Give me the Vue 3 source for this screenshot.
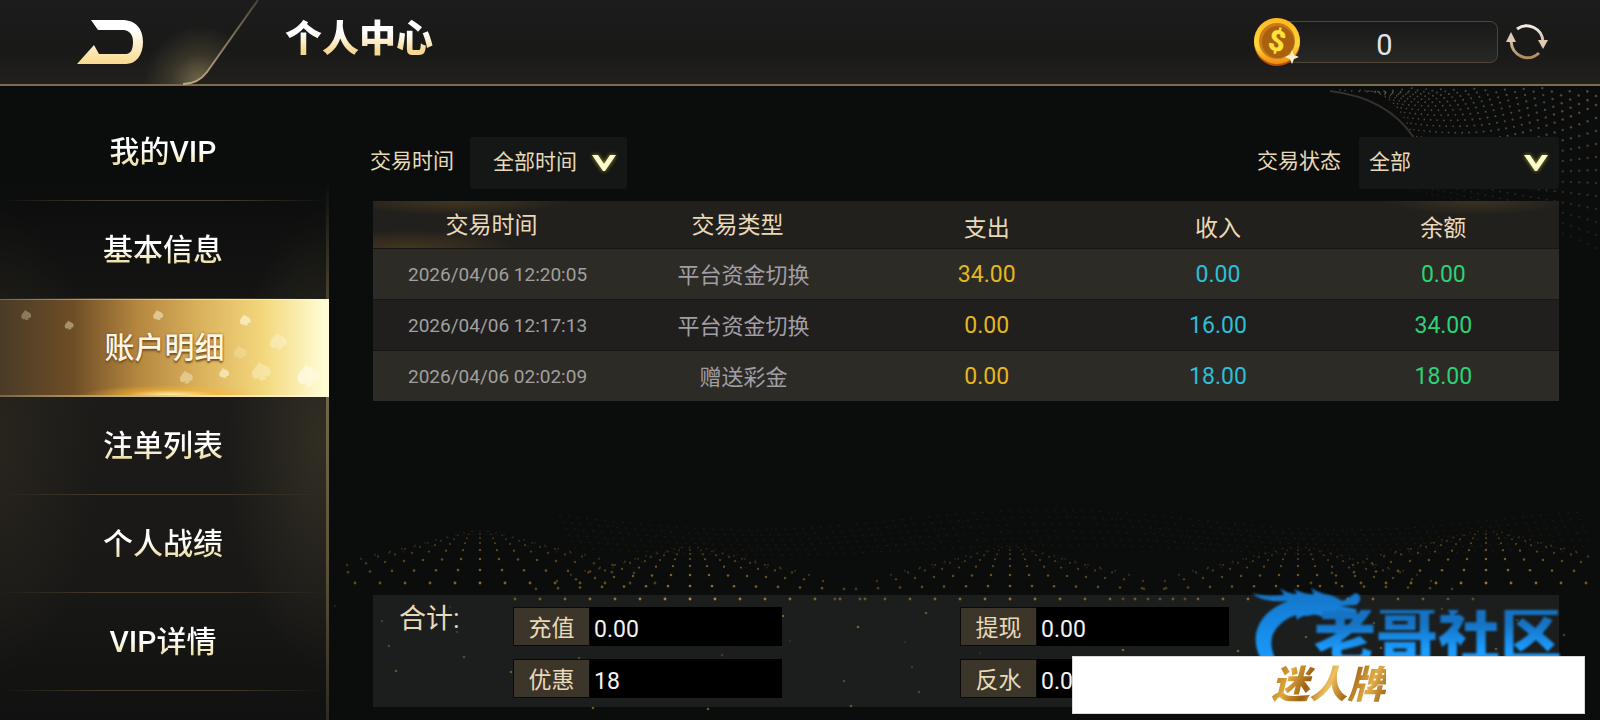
<script setup>
import { ref, computed } from 'vue';

const menus = ['我的VIP', '基本信息', '账户明细', '注单列表', '个人战绩', 'VIP详情'];
const active = ref('账户明细');

const time = ref('全部时间');
const status = ref('全部');
const balance = ref(0);

const records = ref([
  { id: 1, time: '2026/04/06 12:20:05', type: '平台资金切换', out: 34, in: 0, balance: 0 },
  { id: 2, time: '2026/04/06 12:17:13', type: '平台资金切换', out: 0, in: 16, balance: 34 },
  { id: 3, time: '2026/04/06 02:02:09', type: '赠送彩金', out: 0, in: 18, balance: 18 },
]);

const totals = [
  { id: 'recharge', label: '充值', value: '0.00' },
  { id: 'withdraw', label: '提现', value: '0.00' },
  { id: 'bonus', label: '优惠', value: '18' },
  { id: 'rebate', label: '反水', value: '0.00' },
];

// x, y, size, opacity
const spades = [
  [26, 16, 10, 0.3],
  [69, 26, 9, 0.4],
  [158, 16, 10, 0.5],
  [245, 21, 11, 0.65],
  [278, 42, 17, 0.4],
  [240, 53, 13, 0.25],
  [186, 78, 13, 0.4],
  [224, 74, 10, 0.6],
  [261, 72, 19, 0.4],
  [308, 76, 22, 0.9],
];

// the gold wave at the bottom: five hills of dots, the far rows closer together
const hills = [
  { x: 480, top: 531, light: 0.8 },
  { x: 690, top: 547, light: 1 },
  { x: 1010, top: 547, light: 0.8 },
  { x: 1298, top: 547, light: 0.8 },
  { x: 1486, top: 531, light: 0.9 },
];
const rowTops = [0, 3, 7, 12, 19, 28, 39, 52];
const rowGaps = [8, 11, 13, 15, 17, 19, 22, 25];

const waveDots = computed(() => {
  const dots = [];
  hills.forEach((hill) => {
    rowTops.forEach((top, i) => {
      for (let k = -7; k <= 7; k++) {
        const x = hill.x + k * rowGaps[i];
        if (x < 331 || x > 1590) continue;
        const y = hill.top + top + k * k * (7 - i) * 0.06;
        const o = hill.light * (0.3 + i * 0.1) * (1 - Math.abs(k) * 0.07);
        dots.push({ x, y, r: 0.8 + i * 0.09, o });
      }
    });
  });
  // far rows behind the hills
  for (let i = 0; i < 6; i++) {
    for (let x = 560; x < 1580; x += 9) {
      const y = 520 + i * 6 + Math.sin((x - 600) / 95) * (10 - i);
      dots.push({ x: x + i * 3, y, r: 0.8, o: 0.14 });
    }
  }
  // loose dots in front
  for (let i = 0; i < 64; i++) {
    const x = 335 + ((i * 197) % 1250);
    const y = 606 + ((i * 37) % 104);
    dots.push({ x, y, r: 1.3, o: 0.15 + (i % 5) * 0.12 });
  }
  return dots;
});

// the fan of dots in the top right corner
const fanDots = computed(() => {
  const dots = [];
  for (let j = 0; j < 25; j++) {
    const t = Math.min(j / 13, 1);
    const startX = 1340 + 73 * Math.sqrt(t);
    const startY = 90 + 46 * t * t + Math.max(j - 13, 0) * 5;
    const endY = j < 13 ? 105 - (13 - j) * 9 : 105 + (j - 13) * 13;
    for (let k = 0; k <= 26; k++) {
      const u = Math.pow(k / 26, 1.2);
      const x = startX + u * (1596 - startX);
      const y = startY + (endY - startY) * u * u + 8 * Math.sin(u * Math.PI);
      if (y < 88) continue;
      dots.push({ x, y, r: 0.8 + u * 0.5, o: j < 14 ? 0.5 : 0.5 - (j - 13) * 0.036 });
    }
  }
  return dots;
});

function money(n) {
  return n.toFixed(2);
}

function refresh() {
  balance.value = 0;
}
</script>

<template>
  <div class="page">
    <svg class="backdrop" viewBox="0 0 1600 720" preserveAspectRatio="xMidYMid slice" aria-hidden="true">
      <circle v-for="(d, i) in waveDots" :key="'w' + i" :cx="d.x" :cy="d.y" :r="d.r" :opacity="d.o" fill="#b07f2e" />
      <circle v-for="(d, i) in fanDots" :key="'f' + i" :cx="d.x" :cy="d.y" :r="d.r" :opacity="d.o" fill="#9a8460" />
      <path d="M1330 91 Q1388 98 1414 138" fill="none" stroke="#35302a" stroke-width="2" />
    </svg>

    <header class="header">
      <svg class="header-tab" viewBox="0 0 270 86" aria-hidden="true">
        <defs>
          <radialGradient id="tabGlow" gradientUnits="userSpaceOnUse" cx="200" cy="82" r="56">
            <stop offset="0" stop-color="#8d8058" stop-opacity="0.75" />
            <stop offset="0.5" stop-color="#8d8058" stop-opacity="0.25" />
            <stop offset="1" stop-color="#8d8058" stop-opacity="0" />
          </radialGradient>
          <linearGradient id="tabLine" x1="0" y1="0" x2="0" y2="1">
            <stop offset="0" stop-color="#4a4338" />
            <stop offset="1" stop-color="#bda987" />
          </linearGradient>
        </defs>
        <path d="M0 0 H258 L207 72 Q198 84 183 84 H0 Z" fill="url(#tabGlow)" />
        <path d="M258 0 L207 72 Q198 84 183 84" fill="none" stroke="url(#tabLine)" stroke-width="2" />
      </svg>
      <button class="back" aria-label="返回">
        <svg width="68" height="46" viewBox="76 19 68 46">
          <defs>
            <linearGradient id="backFill" x1="0" y1="0" x2="0" y2="1">
              <stop offset="0.2" stop-color="#ffffff" />
              <stop offset="1" stop-color="#f9d98c" />
            </linearGradient>
          </defs>
          <path
            d="M91 20 H122 C136 20 143 29 143 42 C143 55 136 64 126 64 H77 L94 45 L99 54 H126 C131 54 133 49 133 42 C133 35 130 31 124 30 H98 Z"
            fill="url(#backFill)"
          />
        </svg>
      </button>
      <h1 class="title">个人中心</h1>
      <div class="wallet">
        <svg class="coin" width="48" height="48" viewBox="0 0 48 48" aria-hidden="true">
          <defs>
            <linearGradient id="coinRim" x1="0" y1="0" x2="0" y2="1">
              <stop offset="0" stop-color="#ffb820" />
              <stop offset="0.6" stop-color="#ffd83c" />
              <stop offset="1" stop-color="#f08a10" />
            </linearGradient>
          </defs>
          <circle cx="24" cy="25" r="23" fill="#b4520a" />
          <circle cx="24" cy="23" r="23" fill="url(#coinRim)" />
          <circle cx="24" cy="23" r="18" fill="#c87a18" />
          <circle cx="25" cy="24" r="16" fill="#a9600f" />
          <text class="coin-sign" x="24" y="33" text-anchor="middle" transform="rotate(12 24 23)">$</text>
          <path d="M39 32 L41 37 L46 39 L41 41 L39 46 L37 41 L32 39 L37 37 Z" fill="#fff3cf" />
        </svg>
        <output class="balance">{{ balance }}</output>
        <button class="refresh" aria-label="刷新" @click="refresh">
          <svg width="42" height="40" viewBox="0 0 42 40">
            <defs>
              <linearGradient id="refreshLine" gradientUnits="userSpaceOnUse" x1="0" y1="2" x2="0" y2="38">
                <stop offset="0" stop-color="#f6f2ec" />
                <stop offset="1" stop-color="#a98559" />
              </linearGradient>
            </defs>
            <g fill="none" stroke="url(#refreshLine)" stroke-width="3">
              <path d="M11 7 C22 -1 36 7 37 19" />
              <path d="M33 31 C22 41 6 34 5 19" />
            </g>
            <path d="M32 18 H42 L37 27 Z" fill="#dccbae" />
            <path d="M0 20 H10 L5 10 Z" fill="#dccbae" />
          </svg>
        </button>
      </div>
    </header>

    <div class="body">
      <nav class="sidebar">
        <button
          v-for="menu in menus"
          :key="menu"
          class="menu"
          :class="{ active: menu === active }"
          @click="active = menu"
        >
          <svg v-if="menu === active" class="spades" viewBox="0 0 329 98" aria-hidden="true">
            <path
              v-for="(s, i) in spades"
              :key="i"
              d="M0 -5 C1 -3 5 -2 5 1 C5 4 2 4 1 3 L2 5 H-2 L-1 3 C-2 4 -5 4 -5 1 C-5 -2 -1 -3 0 -5 Z"
              fill="#fff8dc"
              :opacity="s[3]"
              :transform="`translate(${s[0]} ${s[1]}) rotate(-12) scale(${s[2] / 10})`"
            />
          </svg>
          <span class="menu-text">{{ menu }}</span>
        </button>
      </nav>

      <main class="main">
        <div class="filters">
          <label for="time">交易时间</label>
          <div class="select">
            <select id="time" v-model="time">
              <option>全部时间</option>
              <option>今天</option>
              <option>昨天</option>
            </select>
            <svg class="arrow" width="26" height="20" viewBox="0 0 26 20" aria-hidden="true">
              <path d="M1 2 H7 L13 11 L19 2 H25 L14 18 H12 Z" fill="#fdfbd2" />
            </svg>
          </div>
          <label class="status-label" for="status">交易状态</label>
          <div class="select wide">
            <select id="status" v-model="status">
              <option>全部</option>
              <option>支出</option>
              <option>收入</option>
            </select>
            <svg class="arrow" width="26" height="20" viewBox="0 0 26 20" aria-hidden="true">
              <path d="M1 2 H7 L13 11 L19 2 H25 L14 18 H12 Z" fill="#fdfbd2" />
            </svg>
          </div>
        </div>

        <table class="records">
          <thead>
            <tr>
              <th class="col-time">交易时间</th>
              <th class="col-type">交易类型</th>
              <th class="col-out amount">支出</th>
              <th class="col-in amount">收入</th>
              <th class="amount">余额</th>
            </tr>
          </thead>
          <tbody>
            <tr v-for="item in records" :key="item.id">
              <td class="time">{{ item.time }}</td>
              <td class="type">{{ item.type }}</td>
              <td class="out">{{ money(item.out) }}</td>
              <td class="in">{{ money(item.in) }}</td>
              <td class="rest">{{ money(item.balance) }}</td>
            </tr>
          </tbody>
        </table>

        <section class="summary">
          <h2>合计:</h2>
          <div class="totals">
            <div v-for="t in totals" :key="t.id" class="total">
              <label :for="t.id">{{ t.label }}</label>
              <input :id="t.id" type="text" :value="t.value" readonly />
            </div>
          </div>
        </section>
      </main>
    </div>

    <div class="watermark">
      <svg class="dragon" width="112" height="80" viewBox="0 0 112 80" aria-hidden="true">
        <defs>
          <linearGradient id="dragonFill" x1="0" y1="0" x2="0" y2="1">
            <stop offset="0" stop-color="#1673c4" />
            <stop offset="0.4" stop-color="#1585e0" />
            <stop offset="1" stop-color="#1b9dff" />
          </linearGradient>
        </defs>
        <path
          d="M0 9 Q12 13 32 11 L28 4 Q36 10 45 10 L42 5 Q53 11 62 10 L59 4 Q69 10 78 11 Q86 14 90 17 Q98 14 103 9 Q108 10 108 13 Q109 18 104 21 L88 22 L104 25 Q106 30 101 32 Q90 30 83 28 Q74 28 70 33 Q64 29 56 32 Q50 31 45 36 L44 31 Q28 36 21 50 Q16 63 26 80 H12 Q2 66 4 50 Q8 28 36 17 Q10 19 0 9 Z"
          fill="url(#dragonFill)"
        />
      </svg>
      <span class="watermark-text">老哥社区</span>
    </div>
    <div class="banner"><span>迷人牌</span></div>
  </div>
</template>

<style>
body {
  background: #0b0c0c;
}
</style>

<style scoped>
.page {
  position: relative;
  display: flex;
  flex-direction: column;
  min-height: 100vh;
  overflow: hidden;
  background: #0b0d0c;
  color: #e8d9b8;
  font-family: Roboto, 'Noto Sans CJK SC', sans-serif;
}

.page * {
  box-sizing: border-box;
}

button {
  padding: 0;
  border: 0;
  background: none;
  font: inherit;
  cursor: pointer;
}

svg {
  display: block;
}

.backdrop {
  position: absolute;
  inset: 0;
  width: 100%;
  height: 100%;
}

/*header*/
.header {
  position: relative;
  display: flex;
  align-items: center;
  height: 86px;
  padding: 0 52px 0 76px;
  border-bottom: 2px solid #7d6b50;
  background: linear-gradient(#1d1c1c, #191918 60%, #22201d);
}

.header-tab {
  position: absolute;
  top: 0;
  left: 0;
  width: 270px;
  height: 86px;
}

.back {
  position: relative;
}

.title {
  margin: 0 0 4px 141px;
  background: linear-gradient(#ffffff 35%, #f6d98f 75%);
  background-clip: text;
  color: transparent;
  font-size: 37px;
  font-weight: 900;
  line-height: 44px;
}

.wallet {
  display: flex;
  align-items: center;
  margin-left: auto;
}

.coin {
  position: relative;
  margin-right: -24px;
}

.coin-sign {
  fill: #ffe13a;
  font-size: 29px;
  font-weight: 900;
}

.balance {
  width: 221px;
  height: 42px;
  margin-right: 8px;
  padding-right: 6px;
  border: 1px solid #4e4735;
  border-radius: 8px;
  background: linear-gradient(#191919, #272725);
  color: #e3e3ea;
  font-size: 29px;
  line-height: 46px;
  text-align: center;
}

/*sidebar*/
.body {
  position: relative;
  display: flex;
  flex: 1;
}

.sidebar {
  display: flex;
  flex-direction: column;
  width: 329px;
  padding-top: 17px;
  border-right: 3px solid;
  border-image: linear-gradient(transparent 15%, #6f6747 50%, #5c5439 75%, #2e2a20) 1;
  background:
    radial-gradient(ellipse 100px 230px at 0 56%, #28241d, transparent),
    radial-gradient(ellipse 100px 230px at 100% 56%, #322e24, transparent),
    linear-gradient(#0b0d0c 15%, #1c1b19 50%, #191816 78%, #101110);
}

.menu {
  display: grid;
  place-items: center;
  height: 98px;
  border-bottom: 1px solid;
  border-image: linear-gradient(90deg, transparent, #443b28 30%, #443b28 70%, transparent) 1;
  font-size: 30px;
  font-weight: 500;
}

.menu-text {
  grid-area: 1 / 1;
  background: linear-gradient(#ffffff 45%, #eee0a8 80%);
  background-clip: text;
  color: transparent;
  line-height: 40px;
}

.menu.active {
  margin-right: -3px;
  border-top: 1px solid #f6dc9c;
  border-bottom: 2px solid #e8c470;
  border-image: linear-gradient(90deg, #7a6642, #f6dc9c 60%, #fffbe0) 1;
  background:
    radial-gradient(ellipse 90px 10px at 52% 100%, #fff2a8, #ffb62a80 50%, transparent),
    linear-gradient(90deg, #4a3b27, #6e4d26 22%, #b5873f 42%, #dcb45e 62%, #f3d77c 80%, #fffbd2 98%);
}

.active .menu-text {
  background: none;
  color: #fff6e4;
  text-shadow: 0 2px 2px #74501f, 0 0 2px #74501f;
}

.spades {
  grid-area: 1 / 1;
  width: 100%;
}

/*main*/
.main {
  display: flex;
  flex: 1;
  flex-direction: column;
  padding: 51px 41px 13px 44px;
}

.filters {
  display: flex;
  align-items: center;
  margin-left: -3px;
  font-size: 21px;
}

.filters label {
  padding-bottom: 8px;
}

.filters .status-label {
  margin-left: auto;
}

.select {
  display: grid;
  align-items: center;
  width: 157px;
  height: 52px;
  margin-left: 16px;
}

.select select {
  grid-area: 1 / 1;
  width: 100%;
  height: 100%;
  padding: 0 0 2px 23px;
  border: 0;
  border-radius: 3px;
  background: #151616;
  color: inherit;
  font: inherit;
  appearance: none;
}

.wide {
  width: 200px;
  margin-left: 18px;
}

.wide select {
  padding-left: 10px;
}

.arrow {
  grid-area: 1 / 1;
  justify-self: end;
  margin-right: 10px;
  filter: drop-shadow(0 0 2px #a8a418);
  pointer-events: none;
}

.records {
  width: 100%;
  margin-top: 12px;
  border-collapse: collapse;
  table-layout: fixed;
  text-align: center;
}

.records thead tr {
  height: 47px;
  background:
    radial-gradient(ellipse 110px 14px at 7% 0, #43361f, transparent),
    radial-gradient(ellipse 110px 18px at 3% 100%, #43361f, transparent),
    radial-gradient(ellipse 90px 14px at 93% 0, #3b3222, transparent),
    #22201d;
}

.records th {
  padding: 0 12px 2px 0;
  color: #ead9b8;
  font-size: 23px;
  font-weight: 400;
}

.records th.amount {
  padding: 4px 0 0;
}

.col-time {
  width: 21%;
}

.col-type,
.col-out {
  width: 20.5%;
}

.col-in {
  width: 18.5%;
}

.records tbody tr {
  height: 51px;
  border-top: 1px solid #171611;
  background: #2d2b25;
}

.records tbody tr:nth-child(2) {
  background: #201f1d;
}

.records td {
  padding: 2px 0 0;
  font-size: 23px;
}

.records .time {
  color: #a19fa0;
  font-size: 19px;
}

.records .type {
  padding: 0 0 2px;
  color: #a19ea5;
  font-size: 22px;
}

.records .out {
  color: #e4b71f;
}

.records .in {
  color: #2cbfd5;
}

.records .rest {
  color: #2bd276;
}

.summary {
  display: flex;
  height: 112px;
  margin-top: auto;
  padding: 12px 0 0 26px;
  background: #ffffff12;
}

.summary h2 {
  width: 114px;
  margin: 0;
  font-size: 27px;
  font-weight: 400;
  line-height: 24px;
}

.totals {
  display: grid;
  flex: 1;
  grid-template-columns: 447px 1fr;
  align-content: start;
  gap: 13px 0;
}

.total {
  display: flex;
  height: 39px;
}

.total label {
  width: 77px;
  border: 1px solid #0a0a08;
  background: #3c362a;
  font-size: 23px;
  line-height: 41px;
  text-align: center;
}

.total input {
  width: 192px;
  padding: 5px 0 0 4px;
  border: 0;
  background: #000;
  color: #f4f4f4;
  font: inherit;
  font-size: 23px;
}

/*floating ads*/
.watermark {
  position: absolute;
  right: 38px;
  bottom: 56px;
  display: flex;
  align-items: flex-start;
  height: 80px;
  filter: blur(1px);
}

.dragon {
  margin-right: -50px;
}

.watermark-text {
  margin-top: 26px;
  background: linear-gradient(#1673c4 25%, #1b9dff 75%);
  background-clip: text;
  color: transparent;
  font-size: 62px;
  font-weight: 900;
  line-height: 54px;
}

.banner {
  position: absolute;
  right: 15px;
  bottom: 6px;
  display: grid;
  place-items: center;
  width: 513px;
  height: 58px;
  border: 1px solid #d8d8d4;
  background: #fff;
}

.banner span {
  background: linear-gradient(115deg, #8a5410, #e0a83c 20%, #9a5f12 35%, #f0c060 50%, #a86a18 65%, #e2ad48 80%, #7c4a0c);
  background-clip: text;
  color: transparent;
  font-size: 38px;
  font-style: italic;
  font-weight: 900;
  line-height: 56px;
}
</style>
